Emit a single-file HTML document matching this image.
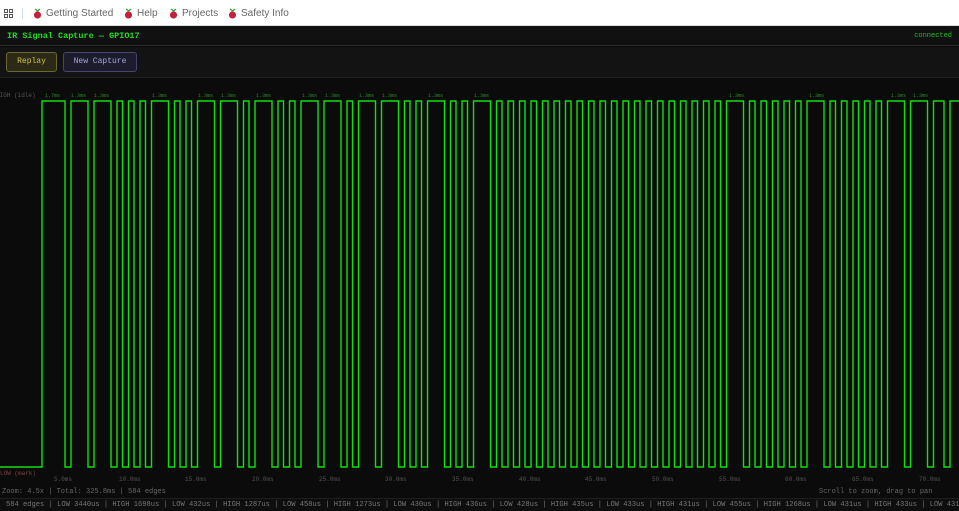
<!DOCTYPE html>
<html><head><meta charset="utf-8"><style>
*{margin:0;padding:0;box-sizing:border-box}
body{width:959px;height:510px;overflow:hidden;background:#0b0b0b;font-family:"Liberation Mono",monospace;position:relative}
.top{position:absolute;left:0;top:0;width:959px;height:26px;background:#fff;border-bottom:1px solid #ddd;font-family:"Liberation Sans",sans-serif;font-size:10px;color:#666}
.top span{position:absolute;top:8px}
.rb{position:absolute;top:8px;width:9px;height:11px}
.title{position:absolute;left:0;top:26px;width:959px;height:20px;background:#111;border-bottom:1px solid #2a2a2a}
.title b{position:absolute;left:7px;top:5px;font-size:8.5px;color:#22dd22}
.title i{position:absolute;right:7px;top:6px;font-size:7px;color:#22bb22;font-style:normal}
.btns{position:absolute;left:0;top:47px;width:959px;height:31px;background:#131313;border-bottom:1px solid #222}
.btn{position:absolute;top:5px;height:20px;border-radius:3px;font-size:8px;line-height:18px;text-align:center}
.t{position:absolute;font-size:6px;color:#555;white-space:nowrap}
.g{position:absolute;font-size:5px;color:#2a8a2a;top:93px}
.status{position:absolute;left:0;top:498px;width:959px;height:12px;background:#0e0e0e;border-top:1px solid #1e1e1e;font-size:7.1px;color:#777;white-space:nowrap;padding-left:6px;line-height:12px}
</style></head><body>
<div class="top">
<svg style="position:absolute;left:4px;top:9px" width="9" height="9"><g fill="none" stroke="#555" stroke-width="1"><rect x=".5" y=".5" width="3" height="3"/><rect x="5.5" y=".5" width="3" height="3"/><rect x=".5" y="5.5" width="3" height="3"/><rect x="5.5" y="5.5" width="3" height="3"/></g></svg>
<div style="position:absolute;left:22px;top:8px;width:1px;height:11px;background:#cde"></div>
<svg class="rb" style="left:33px" viewBox="0 0 9 11"><path d="M2 1l2.5 2M7 1L4.5 3" stroke="#3a3" stroke-width="1.4"/><circle cx="4.5" cy="7" r="3.6" fill="#c4203f"/></svg><span style="left:46px">Getting Started</span>
<svg class="rb" style="left:124px" viewBox="0 0 9 11"><path d="M2 1l2.5 2M7 1L4.5 3" stroke="#3a3" stroke-width="1.4"/><circle cx="4.5" cy="7" r="3.6" fill="#c4203f"/></svg><span style="left:137px">Help</span>
<svg class="rb" style="left:169px" viewBox="0 0 9 11"><path d="M2 1l2.5 2M7 1L4.5 3" stroke="#3a3" stroke-width="1.4"/><circle cx="4.5" cy="7" r="3.6" fill="#c4203f"/></svg><span style="left:182px">Projects</span>
<svg class="rb" style="left:228px" viewBox="0 0 9 11"><path d="M2 1l2.5 2M7 1L4.5 3" stroke="#3a3" stroke-width="1.4"/><circle cx="4.5" cy="7" r="3.6" fill="#c4203f"/></svg><span style="left:241px">Safety Info</span>
</div>
<div class="title"><b>IR Signal Capture — GPIO17</b><i>connected</i></div>
<div class="btns">
<div class="btn" style="left:6px;width:51px;background:#2a2a16;border:1px solid #6a6a30;color:#d4c040">Replay</div>
<div class="btn" style="left:63px;width:74px;background:#1c1c2c;border:1px solid #454570;color:#a8a8d8">New Capture</div>
</div>
<svg style="position:absolute;left:0;top:0" width="959" height="510">
<path fill="none" stroke="#11e011" stroke-width="1.4" d="M0,467H42V101H65V467H71V101H88V467H94V101H111V467H117V101H122.5V467H128.5V101H134V467H140V101H145.5V467H151.5V101H168.5V467H174.5V101H180V467H186V101H191.5V467H197.5V101H214.5V467H220.5V101H237.5V467H243.5V101H249V467H255V101H272V467H278V101H283.5V467H289.5V101H295V467H301V101H318V467H324V101H341V467H347V101H352.5V467H358.5V101H375.5V467H381.5V101H398.5V467H404.5V101H410V467H416V101H421.5V467H427.5V101H444.5V467H450.5V101H456V467H462V101H467.5V467H473.5V101H490.5V467H496.5V101H502V467H508V101H513.5V467H519.5V101H525V467H531V101H536.5V467H542.5V101H548V467H554V101H559.5V467H565.5V101H571V467H577V101H582.5V467H588.5V101H594V467H600V101H605.5V467H611.5V101H617V467H623V101H628.5V467H634.5V101H640V467H646V101H651.5V467H657.5V101H663V467H669V101H674.5V467H680.5V101H686V467H692V101H697.5V467H703.5V101H709V467H715V101H720.5V467H726.5V101H743.5V467H749.5V101H755V467H761V101H766.5V467H772.5V101H778V467H784V101H789.5V467H795.5V101H801V467H807V101H824V467H830V101H835.5V467H841.5V101H847V467H853V101H858.5V467H864.5V101H870V467H876V101H881.5V467H887.5V101H904.5V467H910.5V101H927.5V467H933.5V101H944V467H950V101H959"/>
</svg>
<div class="t" style="left:-4px;top:92px">HIGH (idle)</div>
<div class="t" style="left:0;top:470px;color:#7a4040">LOW (mark)</div>
<div class="g" style="left:45px">1.7ms</div>
<div class="g" style="left:71px">1.3ms</div><div class="g" style="left:94px">1.3ms</div><div class="g" style="left:152px">1.3ms</div><div class="g" style="left:198px">1.3ms</div><div class="g" style="left:221px">1.3ms</div><div class="g" style="left:256px">1.3ms</div><div class="g" style="left:302px">1.3ms</div><div class="g" style="left:325px">1.3ms</div><div class="g" style="left:359px">1.3ms</div><div class="g" style="left:382px">1.3ms</div><div class="g" style="left:428px">1.3ms</div><div class="g" style="left:474px">1.3ms</div><div class="g" style="left:729px">1.3ms</div><div class="g" style="left:809px">1.3ms</div><div class="g" style="left:891px">1.3ms</div><div class="g" style="left:913px">1.3ms</div>
<div class="t" style="left:54px;top:476px">5.0ms</div><div class="t" style="left:119px;top:476px">10.0ms</div><div class="t" style="left:185px;top:476px">15.0ms</div><div class="t" style="left:252px;top:476px">20.0ms</div><div class="t" style="left:319px;top:476px">25.0ms</div><div class="t" style="left:385px;top:476px">30.0ms</div><div class="t" style="left:452px;top:476px">35.0ms</div><div class="t" style="left:519px;top:476px">40.0ms</div><div class="t" style="left:585px;top:476px">45.0ms</div><div class="t" style="left:652px;top:476px">50.0ms</div><div class="t" style="left:719px;top:476px">55.0ms</div><div class="t" style="left:785px;top:476px">60.0ms</div><div class="t" style="left:852px;top:476px">65.0ms</div><div class="t" style="left:919px;top:476px">70.0ms</div>
<div class="t" style="left:2px;top:488px;font-size:7px;color:#666">Zoom: 4.5x | Total: 325.8ms | 584 edges</div>
<div class="t" style="left:819px;top:488px;font-size:7px;color:#666">Scroll to zoom, drag to pan</div>
<div class="status">584 edges | LOW  3440us | HIGH 1698us | LOW  432us | HIGH 1287us | LOW  458us | HIGH 1273us | LOW  430us | HIGH 436us | LOW  428us | HIGH 435us | LOW  433us | HIGH 431us | LOW  455us | HIGH 1268us | LOW  431us | HIGH 433us | LOW  431us</div>
</body></html>
